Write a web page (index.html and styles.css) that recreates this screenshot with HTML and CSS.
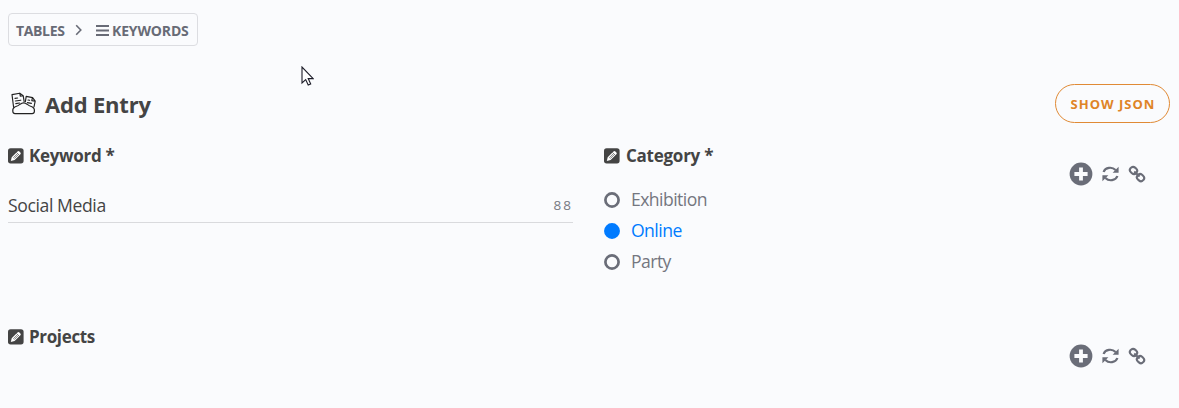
FILE: index.html
```
<!DOCTYPE html>
<html lang="en">
<head>
<meta charset="utf-8">
<title>Add Entry</title>
<link rel="stylesheet" href="styles.css">
</head>
<body>
<svg width="0" height="0" class="defs">
  <symbol id="edit" viewBox="0 0 16 16">
    <rect y=".2" width="15.6" height="15.2" rx="2.6" fill="#444"/>
    <path d="M2.8 13 3.7 9.2 9.5 3.4q1-.9 1.9 0l1 1q.9.9 0 1.9L6.6 12.1z" fill="#fff"/>
    <path d="M8.4 4.4 11.4 7.4M5.3 9.8 9.3 5.8M6.3 10.6 10.2 6.7" stroke="#444" stroke-width=".65" fill="none"/>
  </symbol>
  <symbol id="plus" viewBox="0 0 24 24">
    <circle cx="12" cy="12" r="11.4" fill="#6a6d78"/>
    <path d="M12 5.4v13.2M5.4 12h13.2" stroke="#fafbfd" stroke-width="3.8"/>
  </symbol>
  <symbol id="refresh" viewBox="0 0 17 16">
    <path d="M1.6 6C3.2 1.2 10 .4 13.6 4M15.4 10C13.8 14.8 7 15.6 3.4 12" fill="none" stroke="#6a6d78" stroke-width="2.2"/>
    <path d="M16.6.8v6h-6zM.4 15.2v-6h6z" fill="#6a6d78"/>
  </symbol>
  <symbol id="link" viewBox="0 0 18 18">
    <g fill="none" stroke="#6a6d78" stroke-width="2.1">
      <rect x="1.8" y="2.3" width="7.4" height="6.2" rx="3" transform="rotate(42 5.5 5.4)"/>
      <rect x="8.8" y="9.5" width="7.4" height="6.2" rx="3" transform="rotate(42 12.5 12.6)"/>
      <path d="m6.2 6.4 5.4 5.2"/>
    </g>
  </symbol>
</svg>

<nav class="crumbs">
  <span class="crumb crumb-tables">TABLES</span>
  <svg class="chevron" viewBox="0 0 8 12"><path d="m1.2 1.2 4.6 4.8-4.6 4.8" fill="none" stroke="#686b76" stroke-width="1.6"/></svg>
  <svg class="bars" viewBox="0 0 13 11"><path d="M0 1h13M0 5.5h13M0 10h13" stroke="#686b76" stroke-width="1.8"/></svg>
  <span class="crumb crumb-keywords">KEYWORDS</span>
</nav>

<header class="head">
  <svg class="folder" viewBox="0 0 26 24">
    <g fill="none" stroke="#222" stroke-width="1.15" stroke-linejoin="round" stroke-linecap="round">
      <path d="M2.6 15.2 1 2.6 8.8 1.2l3.4 2.4 1 6.2M8.8 1.2l.5 3 2.9-.6"/>
      <path d="M4 6.4 6.6 6M4.4 9 9.8 8.2M4.8 11.6 8.6 11"/>
      <path d="m14.4 9.6.8-5.2 6.4 1.2 2.6 3.6-1.2 5.6M21.4 5.6l-.6 3 3.4.6M17 8l1.6.3M16.4 10.6l4 .8"/>
      <path d="M1.8 19.4q-.4-3.2 2-4.4 3.8-1.2 5.4-2.8 1.6-1.4 3.4-1.4t3.4 1.4q1.6 1.6 5.4 2.8 2.4 1.2 2 4.4-.2 2.2-2.2 2.2H4q-2 0-2.2-2.2z" fill="#fafbfd"/>
    </g>
  </svg>
  <h1 class="title">Add Entry</h1>
  <button class="json">SHOW JSON</button>
</header>

<main class="form">
  <section class="field">
    <h2 class="label"><svg class="edit"><use href="#edit"/></svg><span class="label-keyword">Keyword *</span></h2>
    <div class="input"><span class="value">Social Media</span><span class="count">88</span></div>
  </section>
  <section class="field field-category">
    <div>
      <h2 class="label"><svg class="edit"><use href="#edit"/></svg><span class="label-category">Category *</span></h2>
      <ul class="options">
        <li class="option"><svg class="radio" viewBox="0 0 16 16"><circle cx="8" cy="8" r="6.6"/></svg><span>Exhibition</span></li>
        <li class="option selected"><svg class="radio" viewBox="0 0 16 16"><circle cx="8" cy="8" r="6.6"/></svg><span>Online</span></li>
        <li class="option"><svg class="radio" viewBox="0 0 16 16"><circle cx="8" cy="8" r="6.6"/></svg><span>Party</span></li>
      </ul>
    </div>
    <div class="actions"><svg class="plus"><use href="#plus"/></svg><svg class="refresh"><use href="#refresh"/></svg><svg class="link"><use href="#link"/></svg></div>
  </section>
  <section class="field field-projects">
    <h2 class="label"><svg class="edit"><use href="#edit"/></svg><span class="label-projects">Projects</span></h2>
    <div class="actions"><svg class="plus"><use href="#plus"/></svg><svg class="refresh"><use href="#refresh"/></svg><svg class="link"><use href="#link"/></svg></div>
  </section>
</main>

<svg class="cursor" viewBox="0 0 13 20"><path d="M1 1v16l3.7-3.4 2.5 5.5 2.5-1.1-2.5-5.4h5z" fill="#fff" stroke="#1c1c28" stroke-width="1.1"/></svg>
</body>
</html>
```
FILE: styles.css
```
* { box-sizing: border-box; }
body {
  margin: 0;
  height: 408px;
  padding: 13px 9px 0 8px;
  overflow: hidden;
  background: #fafbfd;
  color: #444;
  font-family: "Open Sans", "Noto Sans", sans-serif;
}
svg { display: block; flex: none; }
.defs { position: absolute; }

.crumbs {
  display: flex;
  align-items: center;
  width: 190px;
  height: 33px;
  padding: 2px 0 0 7px;
  border: 1px solid #dcdde1;
  border-radius: 4px;
  color: #686b76;
  font-size: 14px;
  font-weight: 700;
  line-height: 20px;
}
.crumb { white-space: nowrap; }
.crumb-tables { width: 59px; letter-spacing: -0.35px; }
.crumb-keywords { letter-spacing: -0.15px; }
.chevron { width: 8px; height: 12px; margin-top: -2px; }
.bars { width: 13px; height: 11px; margin: 0 3px 0 13px; }

.head {
  display: flex;
  align-items: center;
  height: 39px;
  margin-top: 38px;
}
.folder { width: 26px; height: 24px; margin: 1px 0 0 3px; }
.title {
  flex: 1;
  margin: 0 0 0 8px;
  font-size: 22px;
  line-height: 30px;
  font-weight: 700;
  letter-spacing: -0.2px;
}
.json {
  width: 115px;
  height: 39px;
  padding: 1px 0 0 1px;
  border: 1px solid #e08a35;
  border-radius: 20px;
  background: transparent;
  color: #df8427;
  font: 700 13px "Open Sans", "Noto Sans", sans-serif;
  letter-spacing: 1px;
}

.form {
  display: grid;
  grid-template-columns: 565px 566px;
  column-gap: 31px;
  grid-template-rows: 181px auto;
  padding-top: 21px;
}
.label {
  display: flex;
  align-items: center;
  height: 24px;
  margin: 0;
  font-size: 17px;
  line-height: 24px;
  font-weight: 700;
}
.edit { width: 16px; height: 16px; margin-right: 5px; }
.label-keyword { letter-spacing: -0.3px; }
.label-category { letter-spacing: -0.25px; }
.label-projects { letter-spacing: -0.35px; }
.input {
  display: flex;
  align-items: center;
  justify-content: space-between;
  height: 33px;
  margin-top: 22px;
  padding-bottom: 2px;
  border-bottom: 1px solid #d9dadd;
}
.value { font-size: 17.6px; letter-spacing: -0.4px; }
.count { color: #777982; font-size: 13.5px; letter-spacing: 2px; }

.field-category { display: flex; justify-content: space-between; }
.field-category .edit { margin-left: 0.4px; margin-right: 5.6px; }
.field-projects { grid-column: 1 / -1; display: flex; justify-content: space-between; }
.options { margin: 16px 0 0; padding: 0; list-style: none; }
.option {
  display: flex;
  align-items: center;
  height: 31px;
  padding-bottom: 1px;
  color: #74767f;
  font-size: 17.6px;
  letter-spacing: -0.55px;
}
.radio {
  width: 16px;
  height: 16px;
  margin: 1px 10.6px 0 0.4px;
  fill: none;
  stroke: #6a6d78;
  stroke-width: 2.7;
}
.selected { color: #007bff; }
.selected .radio { fill: #007bff; stroke: #007bff; }

.actions {
  display: flex;
  align-items: center;
  height: 24px;
  margin: 18px 23.6px 0 0;
}
.field-projects .actions { margin-top: 18.5px; }
.plus { width: 24px; height: 24px; }
.refresh { width: 17px; height: 16px; margin-left: 9px; }
.link { width: 18px; height: 18px; margin-left: 9px; }
.cursor { position: absolute; left: 301px; top: 66px; width: 13px; height: 20px; }
```
